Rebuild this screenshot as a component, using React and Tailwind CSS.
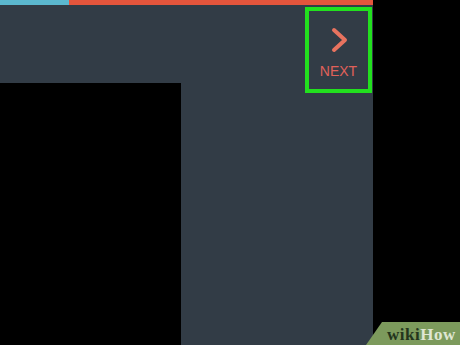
export default function App() {
  return (
    <div className="relative w-[460px] h-[345px] bg-black overflow-hidden">
      <div className="w-[373px] h-[345px] bg-[#323c46] flex flex-col">
        <div className="flex h-[5px] shrink-0">
          <div className="w-[69px] bg-[#5bb8cf]" />
          <div className="flex-1 bg-[#e4553c]" />
        </div>
        <div className="flex justify-end pt-[2px] pr-[1px]">
          <div className="w-[67px] h-[86px] border-[4px] border-[#22e01e] flex flex-col items-center pt-[16px]">
            <svg width="20" height="26" viewBox="0 0 20 26" className="ml-[2px]">
              <path d="M4 3 L15 13 L4 23" fill="none" stroke="#e8735f" strokeWidth="4" strokeLinecap="round" strokeLinejoin="round" />
            </svg>
            <div className="mt-[11px] text-[14px] leading-none text-[#e0615a]" style={{ fontFamily: '"Liberation Sans", Arial, sans-serif' }}>NEXT</div>
          </div>
        </div>
        <div className="mt-[-10px] w-[181px] flex-1 bg-black" />
      </div>
      <div className="absolute left-[366px] top-[322px] w-[94px] h-[23px] bg-[#7c9a5c] [clip-path:polygon(16px_0,100%_0,100%_100%,0_100%)]" />
      <div className="absolute left-[387px] top-[326px] text-[17px] font-bold leading-none tracking-[0.5px]" style={{ fontFamily: '"Liberation Serif", "Times New Roman", serif' }}>
        <span className="text-[#23351c]">wiki</span>
        <span className="text-[#dfe6d3]">How</span>
      </div>
    </div>
  );
}
